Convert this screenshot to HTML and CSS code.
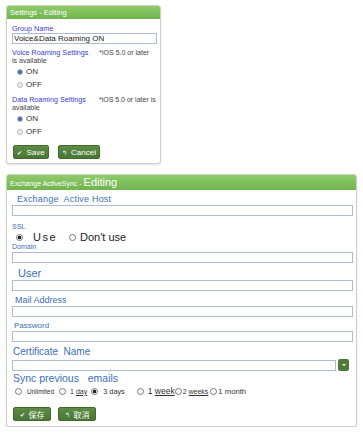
FILE: index.html
```html
<!DOCTYPE html>
<html lang="en">
<head>
    <meta charset="UTF-8">
    <title>Settings - Editing</title>
    <link rel="stylesheet" href="styles.css">
</head>
<body>
    <!-- Roaming settings panel -->
    <div class="panel panel-small">
        <div class="panel-head">Settings - Editing</div>
        <div class="panel-body">
            <div class="lbl lbl-violet">Group Name</div>
            <input class="field field-big" type="text" value="Voice&amp;Data Roaming ON">

            <div class="note-row"><span class="lbl-violet">Voice Roaming Settings</span><span class="note">*iOS 5.0 or later</span></div>
            <div class="note-tail">is available</div>
            <label class="opt"><span class="radio on"></span>ON</label>
            <label class="opt"><span class="radio"></span>OFF</label>

            <div class="note-row"><span class="lbl-violet">Data Roaming Settings</span><span class="note note-data">*iOS 5.0 or later is</span></div>
            <div class="note-tail">available</div>
            <label class="opt"><span class="radio on"></span>ON</label>
            <label class="opt"><span class="radio"></span>OFF</label>

            <div class="btns">
                <button class="btn btn-save"><span class="ico">&#10004;</span>Save</button>
                <button class="btn btn-cancel"><span class="ico">&#8624;</span>Cancel</button>
            </div>
        </div>
    </div>

    <!-- Exchange panel -->
    <div class="panel panel-wide">
        <div class="panel-head"><span class="head-small">Exchange ActiveSync - </span><span class="head-big">Editing</span></div>
        <div class="panel-body wide-body">
            <div class="lbl lbl-host">Exchange&nbsp; Active Host</div>
            <input class="field" type="text">

            <div class="lbl lbl-tiny ssl">SSL</div>
            <div class="ssl-row">
                <label class="opt-big use"><span class="radio-o on"></span><span>Use</span></label>
                <label class="opt-big dont"><span class="radio-o"></span><span>Don't use</span></label>
            </div>
            <div class="lbl lbl-tiny domain">Domain</div>
            <input class="field" type="text">

            <div class="lbl lbl-user">User</div>
            <input class="field" type="text">

            <div class="lbl lbl-mail">Mail Address</div>
            <input class="field" type="text">

            <div class="lbl lbl-pass">Password</div>
            <input class="field" type="text">

            <div class="lbl lbl-cert">Certificate&nbsp; Name</div>
            <div class="select-row">
                <input class="field" type="text">
                <span class="drop"></span>
            </div>

            <div class="lbl lbl-sync">Sync previous&nbsp;&nbsp; emails</div>
            <div class="sync-row">
                <label class="s-opt s-unl"><span class="radio-o"></span><span>Unlimited</span></label>
                <label class="s-opt s-day"><span class="radio-o"></span><span>1 <u>day</u></span></label>
                <label class="s-opt s-3d"><span class="radio-o on"></span><span>3 days</span></label>
                <label class="s-opt s-week"><span class="radio-o"></span><span>1 <u>week</u></span></label>
                <label class="s-opt s-2w"><span class="radio-o"></span><span>2 <u>weeks</u></span></label>
                <label class="s-opt s-month"><span class="radio-o"></span><span>1 month</span></label>
            </div>

            <div class="btns btns-cjk">
                <button class="btn btn-cjk"><span class="ico">&#10004;</span>保存</button>
                <button class="btn btn-cjk"><span class="ico">&#8624;</span>取消</button>
            </div>
        </div>
    </div>
</body>
</html>
```

FILE: styles.css
```css
body {
    margin: 0;
    padding: 5px 0 0 6px;
    background: #ffffff;
    font-family: 'Liberation Sans', Arial, sans-serif;
    color: #333333;
}

.panel {
    border: 1px solid #c9d3c2;
    border-radius: 3px;
    background: #ffffff;
    box-shadow: 0 1px 2px rgba(0, 0, 0, 0.12);
    box-sizing: border-box;
}

.panel-small {
    width: 155px;
    padding-bottom: 4px;
}

.panel-wide {
    width: 351px;
    margin-top: 10px;
    padding-bottom: 5px;
}

.panel-head {
    background: linear-gradient(#8fcb6b, #70b44e);
    color: #ffffff;
    font-size: 7.5px;
    height: 13px;
    line-height: 13px;
    padding-left: 3px;
    border-radius: 2px 2px 0 0;
}

.panel-wide .panel-head {
    height: 15px;
    line-height: 15px;
}

.head-small {
    font-size: 7px;
}

.head-big {
    font-size: 11px;
}

.panel-body {
    padding: 5px 3px 0 5px;
}

.lbl {
    line-height: 9px;
}

.lbl-violet {
    color: #3b3bd4;
    font-size: 7.2px;
}

.field {
    display: block;
    width: 100%;
    box-sizing: border-box;
    height: 11px;
    margin: 0;
    padding: 0 2px;
    border: 1px solid #aebccd;
    background: #ffffff;
    font-family: 'Liberation Sans', Arial, sans-serif;
    outline: none;
}

.field-big {
    font-size: 8px;
    color: #222222;
    padding: 0 1px;
    line-height: 9px;
}

.note-row {
    display: flex;
    margin-top: 4px;
    line-height: 9px;
    white-space: nowrap;
}

.note {
    font-size: 7px;
    color: #444444;
    margin-left: 11px;
}

.note-data {
    margin-left: 13px;
}

.note-tail {
    font-size: 7px;
    color: #444444;
    line-height: 8px;
}

.opt {
    display: flex;
    align-items: center;
    font-size: 8px;
    color: #333333;
    height: 13px;
    padding-left: 5px;
}

.radio {
    width: 4px;
    height: 4px;
    border-radius: 50%;
    border: 1px solid #b8b8b8;
    background: #eeeeee;
    margin-right: 3px;
}

.radio.on {
    background: #4a6aa8;
    border-color: #a9b6cf;
}

.btns {
    display: flex;
    gap: 9px;
    margin-top: 7px;
    padding-left: 1px;
}

.btn {
    background: linear-gradient(#5d8c46, #4a7636);
    color: #ffffff;
    border: 1px solid #44692f;
    border-radius: 2px;
    font-family: 'Liberation Sans', Arial, sans-serif;
    font-size: 8px;
    height: 14px;
    padding: 0;
    display: flex;
    align-items: center;
    justify-content: center;
}

.btn-save {
    width: 36px;
}

.btn-cancel {
    width: 42px;
}

.ico {
    font-size: 6px;
    margin-right: 4px;
}

/* wide panel */
.wide-body {
    padding: 4px 3px 0 5px;
}

.lbl-host {
    color: #3c6fb6;
    font-size: 9px;
    line-height: 10px;
    padding-left: 5px;
    margin-bottom: 1px;
    letter-spacing: 0.2px;
}

.lbl-tiny {
    color: #3c6fb6;
    font-size: 7px;
    line-height: 9px;
}

.ssl {
    margin-top: 6px;
}

.domain {
    line-height: 8px;
    margin-bottom: 1px;
}

.ssl-row {
    display: flex;
    align-items: center;
    height: 12px;
}

.opt-big {
    display: flex;
    align-items: center;
    font-size: 11px;
    color: #222222;
}

.use {
    padding-left: 4px;
    letter-spacing: 1.5px;
}

.use .radio-o {
    margin-right: 10px;
}

.dont {
    margin-left: 12px;
}

.dont .radio-o {
    margin-right: 4px;
}

.radio-o {
    width: 5px;
    height: 5px;
    border-radius: 50%;
    border: 1px solid #777777;
    background: #ffffff;
    margin-right: 4px;
    flex: none;
}

.radio-o.on {
    background: radial-gradient(circle, #222222 45%, #ffffff 60%);
}

.lbl-user {
    color: #3c6fb6;
    font-size: 11px;
    padding-left: 6px;
    margin-top: 3px;
    line-height: 14px;
}

.lbl-mail {
    color: #3c6fb6;
    font-size: 9px;
    padding-left: 3px;
    margin-top: 3px;
    line-height: 12px;
}

.lbl-pass {
    color: #3c6fb6;
    font-size: 8px;
    padding-left: 2px;
    margin-top: 3px;
    line-height: 11px;
}

.lbl-cert {
    color: #3c6fb6;
    font-size: 10px;
    padding-left: 1px;
    margin-top: 2px;
    line-height: 15px;
}

.select-row {
    display: flex;
    align-items: center;
    gap: 2px;
}

.drop {
    flex: none;
    width: 11px;
    height: 12px;
    background: #4f7a3b;
    border-radius: 2px;
    margin-right: 4px;
    position: relative;
}

.drop::after {
    content: "";
    position: absolute;
    left: 4px;
    top: 5px;
    border-left: 2px solid transparent;
    border-right: 2px solid transparent;
    border-top: 2px solid #ffffff;
}

.lbl-sync {
    color: #3c6fb6;
    font-size: 10.5px;
    padding-left: 1px;
    margin-top: 1px;
    line-height: 13px;
}

.sync-row {
    display: flex;
    align-items: center;
    height: 12px;
    padding-left: 3px;
    color: #333333;
    white-space: nowrap;
}

.s-opt {
    display: flex;
    align-items: center;
    font-size: 7px;
}

.s-opt .radio-o {
    width: 5px;
    height: 5px;
    margin-right: 4px;
}

.s-unl {
    font-size: 6.5px;
}

.s-unl .radio-o {
    margin-right: 5px;
}

.s-day {
    margin-left: 5px;
}

.s-3d {
    margin-left: 4px;
    font-size: 7.3px;
}

.s-3d .radio-o {
    margin-right: 5px;
}

.s-week {
    margin-left: 12px;
    font-size: 8.5px;
}

.s-2w {
    margin-left: 0;
}

.s-2w .radio-o {
    margin-right: 1px;
}

.s-month {
    margin-left: 2px;
    font-size: 7.7px;
}

.s-month .radio-o {
    margin-right: 1px;
}

.btns-cjk {
    margin-top: 10px;
    gap: 7px;
}

.btn-cjk {
    font-family: 'Noto Sans CJK SC', sans-serif;
    width: 38px;
}
```
